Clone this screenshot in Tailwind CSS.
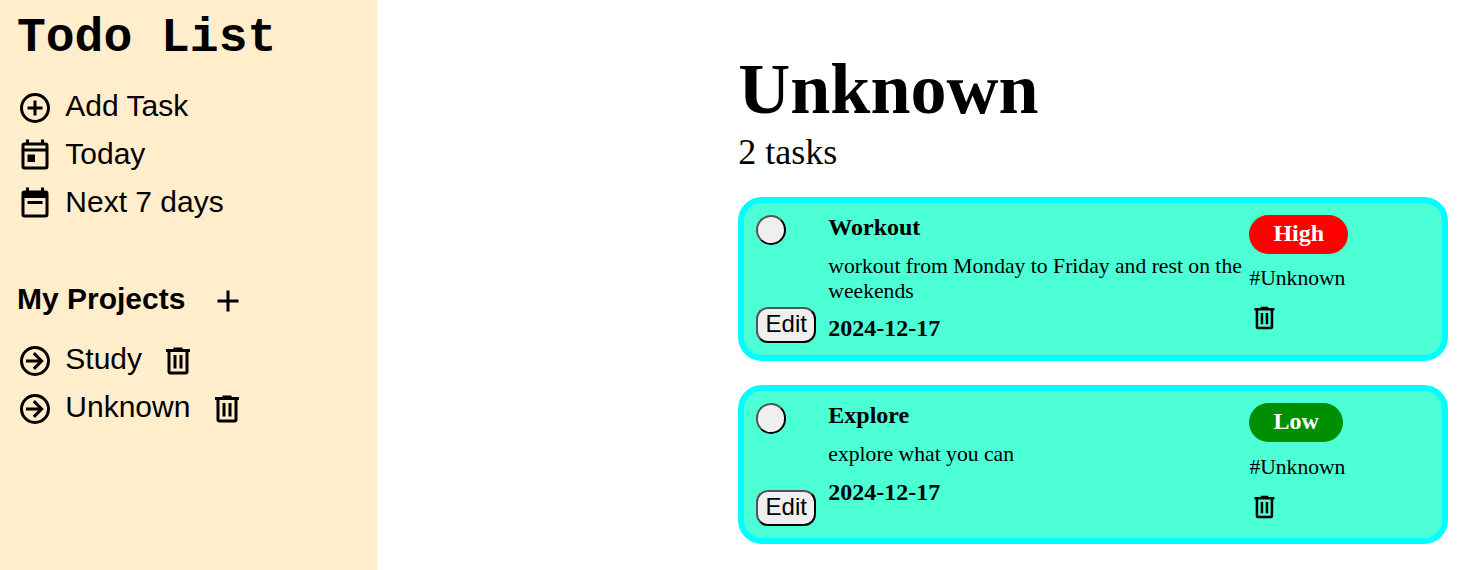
<!DOCTYPE html>
<html lang="en">
<head>
<meta charset="utf-8">
<title>Todo List</title>
<script src="https://cdn.jsdelivr.net/npm/@tailwindcss/browser@4"></script>
</head>
<body class="bg-white text-black">
<svg class="hidden">
  <symbol id="plus-circle" viewBox="0 0 24 24"><path d="M12,20C7.59,20 4,16.41 4,12C4,7.59 7.59,4 12,4C16.41,4 20,7.59 20,12C20,16.41 16.41,20 12,20M12,2A10,10 0 0,0 2,12A10,10 0 0,0 12,22A10,10 0 0,0 22,12A10,10 0 0,0 12,2M13,7H11V11H7V13H11V17H13V13H17V11H13V7Z"/></symbol>
  <symbol id="today" viewBox="0 0 24 24"><path fill-rule="evenodd" d="M7 11H12V16H7ZM19 3H18V1H16V3H8V1H6V3H5A2 2 0 0 0 3 5V19A2 2 0 0 0 5 21H19A2 2 0 0 0 21 19V5A2 2 0 0 0 19 3ZM19 19H5V9H19ZM19 7H5V5H19Z"/></symbol>
  <symbol id="range" viewBox="0 0 24 24"><path fill-rule="evenodd" d="M7 10H17V12H7ZM19 3H18V1H16V3H8V1H6V3H5A2 2 0 0 0 3 5V19A2 2 0 0 0 5 21H19A2 2 0 0 0 21 19V5A2 2 0 0 0 19 3ZM19 19H5V8H19Z"/></symbol>
  <symbol id="plus" viewBox="0 0 24 24"><path d="M19,13H13V19H11V13H5V11H11V5H13V11H19V13Z"/></symbol>
  <symbol id="arrow" viewBox="0 0 24 24"><path d="M22,12A10,10 0 0,1 12,22A10,10 0 0,1 2,12A10,10 0 0,1 12,2A10,10 0 0,1 22,12M20,12A8,8 0 0,0 12,4A8,8 0 0,0 4,12A8,8 0 0,0 12,20A8,8 0 0,0 20,12M6,13H14L10.5,16.5L11.92,17.92L17.84,12L11.92,6.08L10.5,7.5L14,11H6V13Z"/></symbol>
  <symbol id="trash" viewBox="0 0 24 24"><path d="M9,3V4H4V6H5V19A2,2 0 0,0 7,21H17A2,2 0 0,0 19,19V6H20V4H15V3H9M7,6H17V19H7V6M9,8V17H11V8H9M13,8V17H15V8H13Z"/></symbol>
</svg>
<div class="flex h-[570px] overflow-hidden">
  <aside class="w-[377px] shrink-0 bg-[#ffedcc] pl-[17px] font-['Liberation_Sans',sans-serif] text-[30px] leading-[34px]">
    <h1 class="pt-[11px] font-['Liberation_Mono',monospace] text-[48px] leading-[54px] font-bold">Todo List</h1>
    <ul class="mt-[24px]">
      <li class="flex h-12 gap-[12.3px]"><svg class="mt-px size-9"><use href="#plus-circle"/></svg><span>Add Task</span></li>
      <li class="flex h-12 gap-[12.3px]"><svg class="mt-px size-9"><use href="#today"/></svg><span>Today</span></li>
      <li class="flex h-12 gap-[12.3px]"><svg class="mt-px size-9"><use href="#range"/></svg><span>Next 7 days</span></li>
    </ul>
    <div class="mt-[49px] flex h-[60px] gap-[24.8px]"><h2 class="font-bold">My Projects</h2><svg class="mt-px size-9"><use href="#plus"/></svg></div>
    <ul>
      <li class="flex h-12 gap-[12.3px]"><svg class="mt-px size-9"><use href="#arrow"/></svg><span>Study</span><svg class="ml-[5.6px] mt-px size-9"><use href="#trash"/></svg></li>
      <li class="flex h-12 gap-[12.3px]"><svg class="mt-px size-9"><use href="#arrow"/></svg><span>Unknown</span><svg class="ml-[6.2px] mt-px size-9"><use href="#trash"/></svg></li>
    </ul>
  </aside>
  <main class="ml-[361px] w-[710px] shrink-0 pt-[48px] font-['Liberation_Serif',serif]">
    <h2 class="pl-[0.3px] text-[72px] leading-[83px] font-bold">Unknown</h2>
    <p class="pl-[0.3px] text-[36px] leading-[42px]">2 tasks</p>
    <article class="mt-6 flex h-[164px] rounded-3xl border-[6px] border-[#00ffff] bg-[#4dffd4] p-3">
      <div class="flex w-[72px] flex-col items-start justify-between">
        <button class="size-[30px] rounded-full border-2 border-black bg-[#efefef] [border-style:outset]"></button>
        <button class="h-9 w-[60px] rounded-xl border-2 border-black bg-[#efefef] pb-[3px] pl-[0.5px] font-['Liberation_Sans',sans-serif] text-2xl leading-[27px] [border-style:outset]">Edit</button>
      </div>
      <div class="w-[421px] pl-[0.3px]">
        <h3 class="text-2xl leading-[25px] font-bold">Workout</h3>
        <p class="mt-[14px] text-[21.65px] leading-[25px]">workout from Monday to Friday and rest on the weekends</p>
        <p class="mt-3 text-2xl leading-[25px] font-bold">2024-12-17</p>
      </div>
      <div class="flex flex-col items-start">
        <span class="rounded-[20px] bg-[#ff0000] pt-[5px] pr-6 pb-[7px] pl-[24.4px] text-2xl leading-[27px] font-bold text-white">High</span>
        <span class="mt-3 pl-[0.4px] text-[21.6px] leading-[25px]">#Unknown</span>
        <svg class="mt-3 size-[30px]" viewBox="-0.35 0 24 24"><use href="#trash" width="24" height="24"/></svg>
      </div>
    </article>
    <article class="mt-6 flex h-[159px] rounded-3xl border-[6px] border-[#00ffff] bg-[#4dffd4] p-3">
      <div class="flex w-[72px] flex-col items-start justify-between">
        <button class="h-[31px] w-[30px] rounded-full border-2 border-black bg-[#efefef] [border-style:outset]"></button>
        <button class="h-9 w-[60px] rounded-xl border-2 border-black bg-[#efefef] pb-[3px] pl-[0.5px] font-['Liberation_Sans',sans-serif] text-2xl leading-[27px] [border-style:outset]">Edit</button>
      </div>
      <div class="w-[421px] pl-[0.3px]">
        <h3 class="text-2xl leading-[25px] font-bold">Explore</h3>
        <p class="mt-[14px] text-[21.65px] leading-[25px]">explore what you can</p>
        <p class="mt-3 text-2xl leading-[27px] font-bold">2024-12-17</p>
      </div>
      <div class="flex flex-col items-start">
        <span class="rounded-[20px] bg-[#008f00] pt-[5px] pr-6 pb-[7px] pl-[24.4px] text-2xl leading-[27px] font-bold text-white">Low</span>
        <span class="mt-[13px] pl-[0.4px] text-[21.6px] leading-[25px]">#Unknown</span>
        <svg class="mt-3 size-[30px]" viewBox="-0.35 0 24 24"><use href="#trash" width="24" height="24"/></svg>
      </div>
    </article>
  </main>
</div>
</body>
</html>
